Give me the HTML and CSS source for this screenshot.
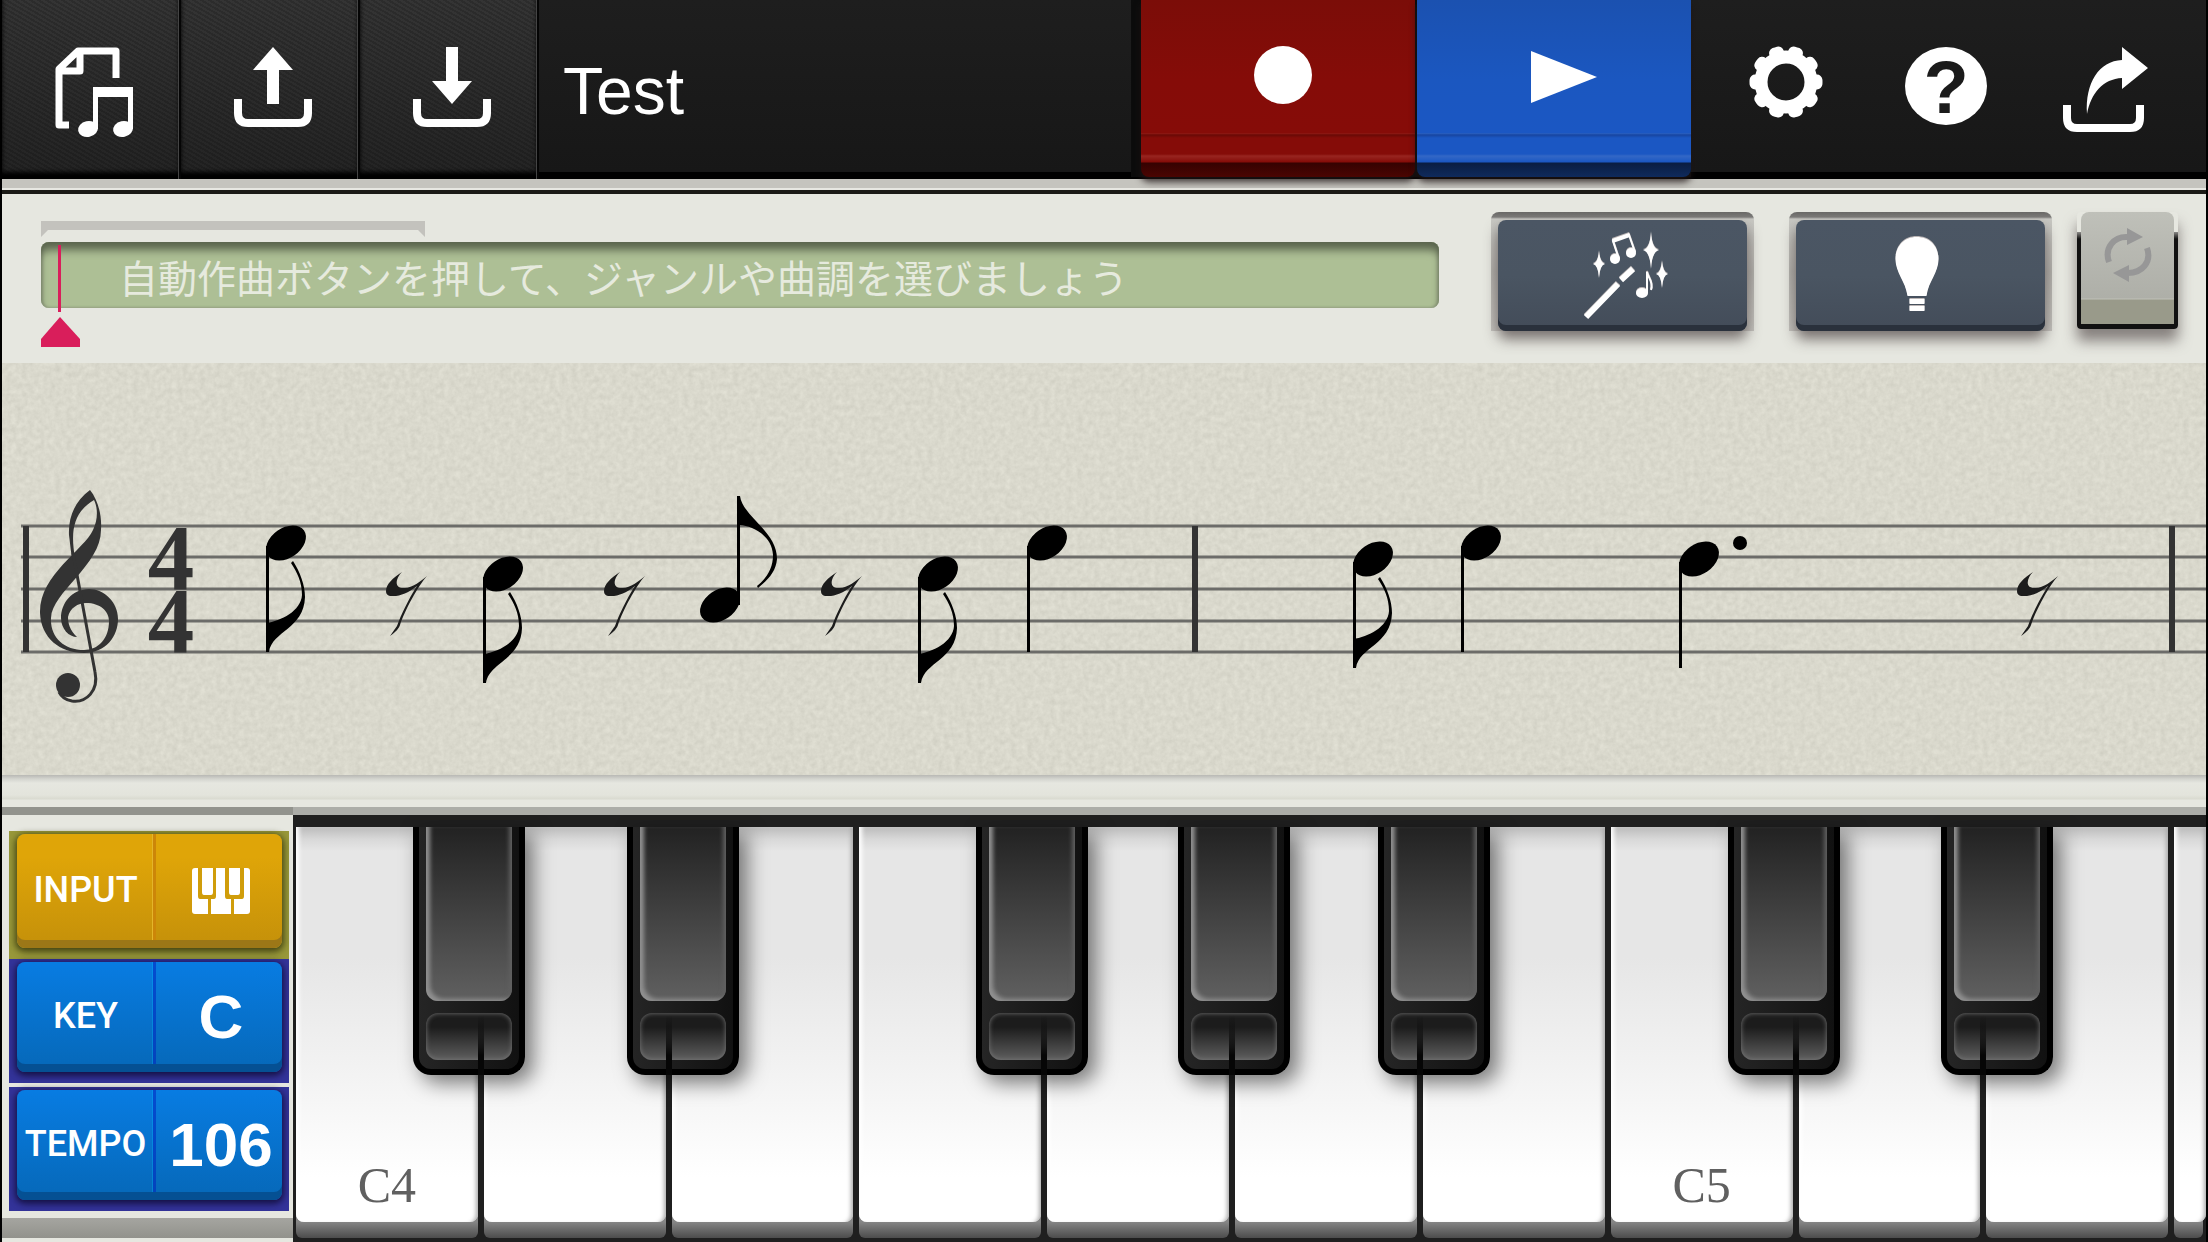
FILE: index.html
```html
<!DOCTYPE html>
<html lang="ja">
<head>
    <meta charset="UTF-8">
    <meta name="viewport" content="width=device-width, initial-scale=1.0">
    <title>Test</title>
    <link rel="stylesheet" href="styles.css">
</head>
<body>
    <!-- Header -->
    <header class="topbar">
        <button class="tool" aria-label="Songs">
            <svg width="78" height="90" viewBox="0 0 78 90">
                <path d="M14 78H4V22L23 4H61V31M4 24H25V4" fill="none" stroke="#fff" stroke-width="7" stroke-linejoin="round"/>
                <path d="M38 40H78V50H38ZM38 40H43V82H38ZM73 40H78V82H73Z" fill="#fff"/>
                <ellipse cx="33" cy="82" rx="10" ry="8" fill="#fff" transform="rotate(-12 33 82)"/>
                <ellipse cx="68" cy="82" rx="10" ry="8" fill="#fff" transform="rotate(-12 68 82)"/>
            </svg>
        </button>
        <button class="tool" aria-label="Upload">
            <svg width="78" height="80" viewBox="0 0 78 80">
                <path d="M39 0L59 23H45V57H33V23H19Z" fill="#fff"/>
                <path d="M4 52V66Q4 76 14 76H64Q74 76 74 66V52" fill="none" stroke="#fff" stroke-width="8"/>
            </svg>
        </button>
        <button class="tool" aria-label="Download">
            <svg width="78" height="80" viewBox="0 0 78 80">
                <path d="M33 0H45V34H59L39 57L19 34H33Z" fill="#fff"/>
                <path d="M4 52V66Q4 76 14 76H64Q74 76 74 66V52" fill="none" stroke="#fff" stroke-width="8"/>
            </svg>
        </button>
        <h1 class="song-title">Test</h1>
        <div class="transport">
            <button class="pad record" aria-label="Record">
                <svg width="58" height="58" viewBox="0 0 58 58"><circle cx="29" cy="29" r="29" fill="#fff"/></svg>
            </button>
            <button class="pad play" aria-label="Play">
                <svg width="66" height="52" viewBox="0 0 66 52"><path d="M0 0L66 26L0 52Z" fill="#fff"/></svg>
            </button>
        </div>
        <div class="actions">
            <button class="action" aria-label="Settings">
                <svg width="74" height="70" viewBox="-37 -35 74 70">
                    <g fill="none" stroke="#fff">
                        <circle r="25" stroke-width="13"/>
                        <circle r="31" stroke-width="11" stroke-linecap="round" pathLength="100" stroke-dasharray="2 8" stroke-dashoffset="1"/>
                    </g>
                </svg>
            </button>
            <button class="action" aria-label="Help">
                <svg width="82" height="78" viewBox="0 0 82 78">
                    <ellipse cx="41" cy="39" rx="41" ry="39" fill="#fff"/>
                    <text x="41" y="66" class="help-mark">?</text>
                </svg>
            </button>
            <button class="action" aria-label="Share">
                <svg width="86" height="86" viewBox="0 0 86 86">
                    <path d="M59 0L85 21L59 42V31C40 32 28 46 24 67C22 36 36 14 59 13Z" fill="#fff"/>
                    <path d="M4 58V71Q4 81 14 81H67Q77 81 77 71V58" fill="none" stroke="#fff" stroke-width="8"/>
                </svg>
            </button>
        </div>
    </header>

    <!-- Timeline and helpers -->
    <section class="toolbar">
        <div class="timeline">
            <svg class="bracket" width="384" height="16" viewBox="0 0 384 16"><path d="M0 0H384V16L377 9H7L0 16Z" fill="#c3c2bd"/></svg>
            <div class="display">
                <p>自動作曲ボタンを押して、ジャンルや曲調を選びましょう</p>
                <span class="playhead"></span>
            </div>
            <svg class="marker" width="40" height="30" viewBox="0 0 40 30"><path d="M19 0L39 22V30H0V22Z" fill="#d91e5b"/></svg>
        </div>
        <div class="slot">
            <button class="slate" aria-label="自動作曲">
                <svg width="86" height="88" viewBox="0 0 86 88" fill="#fff">
                    <path d="M3 85L35 52M38 48L50 37" stroke="#fff" stroke-width="6"/>
                    <path d="M16 19Q17 31 22 32Q17 33 16 46Q15 33 10 32Q15 31 16 19Z"/>
                    <path d="M68 0Q69 17 76 18Q69 20 68 37Q67 20 60 18Q67 17 68 0Z"/>
                    <path d="M79 29Q80 41 85 42Q80 43 79 56Q78 43 73 42Q78 41 79 29Z"/>
                    <path d="M36 27L30 9L46 3L52 20" fill="none" stroke="#fff" stroke-width="2"/>
                    <path d="M29 7L46 1L47 5L30 11Z"/>
                    <circle cx="32" cy="27" r="5"/><circle cx="48" cy="21" r="5"/>
                    <ellipse cx="59" cy="61" rx="6" ry="5"/>
                    <path d="M64 61V40C65 46 71 50 68 58" fill="none" stroke="#fff" stroke-width="2"/>
                </svg>
            </button>
        </div>
        <div class="slot">
            <button class="slate hint" aria-label="ヒント">
                <svg width="44" height="74" viewBox="0 0 43 74" fill="#fff">
                    <path d="M21 0C34 0 43 9 43 22C43 36 33 44 31 59H12C10 44 0 36 0 22C0 9 9 0 21 0ZM14 62H29V67H14ZM14 69H29V74H14Z"/>
                </svg>
            </button>
        </div>
        <div class="loop-slot">
            <button class="loop" aria-label="Loop">
                <svg width="48" height="54" viewBox="0 0 48 54">
                    <path d="M5 34C0 20 10 8 24 9M43 20C48 34 38 45 24 45" fill="none" stroke="#979797" stroke-width="6"/>
                    <path d="M23 0L39 9L23 17ZM25 37V54L9 45Z" fill="#979797"/>
                </svg>
            </button>
        </div>
    </section>

    <!-- Score -->
    <main class="score">
        <svg viewBox="2 363 2204 412">
            <defs>
                <filter id="paper" x="0" y="0" width="100%" height="100%" color-interpolation-filters="sRGB">
                    <feTurbulence type="fractalNoise" baseFrequency="0.18" numOctaves="3" seed="4"/>
                    <feColorMatrix values="0.09 0 0 0 0.808  0.09 0 0 0 0.804  0.09 0 0 0 0.757  0 0 0 0 1"/>
                </filter>
                <ellipse id="head" rx="22" ry="15" transform="rotate(-35)"/>
                <g id="quarter">
                    <use href="#head"/>
                    <path d="M-20 3H-17V109H-20Z"/>
                </g>
                <g id="eighth">
                    <use href="#quarter"/>
                    <path d="M7 18C14 29 19 42 19 54C18 86 -14 88 -17 109H-20V80C-5 78 15 68 16 52C16 39 11 29 5 20Z"/>
                </g>
                <g id="eighth-up">
                    <use href="#head"/>
                    <path d="M17 0V-109H20C23 -88 57 -74 57 -46C56 -34 49 -26 38 -17L37 -19C48 -28 53 -38 53 -50C52 -70 32 -79 20 -80V0Z"/>
                </g>
                <path id="rest" fill="#1c1c1c" d="M16 0C7 6 0 12 0 19C0 25 6 24 10 24C18 23 26 18 31 14C22 28 15 43 11 54L4 64C10 60 13 56 14 53C19 38 32 14 41 4C35 9 26 16 19 16C8 17 9 7 16 0Z"/>
            </defs>
            <rect x="2" y="363" width="2204" height="412" filter="url(#paper)"/>
            <path d="M21 526H2206M21 557H2206M21 589H2206M21 621H2206M21 652H2206" stroke="#6c6c69" stroke-width="3"/>
            <path d="M26 526V652M1195 526V652M2172 526V652" stroke="#333" stroke-width="6"/>

            <!-- Treble clef -->
            <g fill="#333">
                <path d="M90 490C76 500 68 516 69 535L72 560L75 558C70 530 74 512 94 500C98 508 98 520 93 530C84 550 39 575 40 613C41 638 60 653 84 653C106 653 118 636 118 619C118 602 104 589 89 589C72 589 61 603 61 618C61 629 69 637 77 637C70 630 68 624 68 617C70 608 78 603 86 603C100 603 109 611 109 621C109 639 98 650 84 650C64 650 50 637 51 618C52 592 101 565 101 530C102 515 98 500 90 490Z"/>
                <circle cx="68" cy="685" r="12"/>
                <path d="M73 553L95 672C99 691 86 703 72 701C66 700 61 696 59 692" fill="none" stroke="#333" stroke-width="3"/>
            </g>
            <text class="meter"><tspan x="171" y="589">4</tspan><tspan x="171" y="652">4</tspan></text>

            <use href="#eighth" x="286" y="543"/>
            <use href="#rest" x="386" y="572"/>
            <use href="#eighth" x="503" y="574"/>
            <use href="#rest" x="604" y="572"/>
            <use href="#eighth-up" x="720" y="605"/>
            <use href="#rest" x="821" y="572"/>
            <use href="#eighth" x="938" y="574"/>
            <use href="#quarter" x="1047" y="543"/>
            <use href="#eighth" x="1373" y="559"/>
            <use href="#quarter" x="1481" y="543"/>
            <use href="#quarter" x="1699" y="559"/>
            <circle cx="1740" cy="543" r="7"/>
            <use href="#rest" x="2017" y="572"/>
        </svg>
    </main>
    <div class="score-edge"></div>

    <!-- Settings and keyboard -->
    <section class="bottom">
        <div class="settings">
            <div class="box box-input">
                <button class="setting gold">
                    <span class="name">INPUT</span>
                    <span class="value">
                        <svg width="58" height="46" viewBox="0 0 58 46">
                            <rect width="58" height="46" rx="3" fill="#fff"/>
                            <path d="M6 0V28Q6 31 8 31H16V46H19V31H22Q24 31 24 28V0H21V24Q21 27 19 27H12Q10 27 10 24V0ZM33 0V28Q33 31 35 31H39V46H42V31H50Q52 31 52 28V0H48V24Q48 27 46 27H39Q37 27 37 24V0Z" fill="#d09d0a"/>
                        </svg>
                    </span>
                </button>
            </div>
            <div class="box">
                <button class="setting">
                    <span class="name">KEY</span>
                    <span class="value">C</span>
                </button>
            </div>
            <div class="box box-tempo">
                <button class="setting">
                    <span class="name">TEMPO</span>
                    <span class="value">106</span>
                </button>
            </div>
            <div class="settings-foot"></div>
        </div>

        <div class="keyboard">
            <div class="key">
                <button class="white">C4</button>
                <button class="black left" aria-label="C#4"></button>
            </div>
            <div class="key">
                <button class="white" aria-label="D4"></button>
                <button class="black right" aria-label="D#4"></button>
            </div>
            <div class="key">
                <button class="white" aria-label="E4"></button>
            </div>
            <div class="key">
                <button class="white" aria-label="F4"></button>
                <button class="black left" aria-label="F#4"></button>
            </div>
            <div class="key">
                <button class="white" aria-label="G4"></button>
                <button class="black" aria-label="G#4"></button>
            </div>
            <div class="key">
                <button class="white" aria-label="A4"></button>
                <button class="black right" aria-label="A#4"></button>
            </div>
            <div class="key">
                <button class="white" aria-label="B4"></button>
            </div>
            <div class="key">
                <button class="white">C5</button>
                <button class="black left" aria-label="C#5"></button>
            </div>
            <div class="key">
                <button class="white" aria-label="D5"></button>
                <button class="black right" aria-label="D#5"></button>
            </div>
            <div class="key">
                <button class="white" aria-label="E5"></button>
            </div>
            <div class="key">
                <button class="white" aria-label="F5"></button>
            </div>
        </div>
    </section>
</body>
</html>
```
FILE: styles.css
```css
/* Reset */
* {
    margin: 0;
    padding: 0;
    box-sizing: border-box;
}

body {
    display: flex;
    flex-direction: column;
    min-height: 100vh;
    border: solid #000;
    border-width: 0 2px;
    background-color: #e6e7e0;
    font-family: "Liberation Sans", "Noto Sans CJK JP", sans-serif;
    overflow-x: hidden;
}

button {
    border: none;
    background: none;
    color: #fff;
    cursor: pointer;
}

svg {
    display: block;
    overflow: visible;
}

/* Header */
.topbar {
    display: flex;
    height: 194px;
    border-bottom: 4px solid #1b1a16;
    background: linear-gradient(#1e1e1e, #171717 172px, #000 172px, #000 179px, #c5c4be 179px, #c5c4be 188px, #e8e8e2 188px);
}

.tool {
    display: flex;
    justify-content: center;
    align-items: flex-start;
    width: 179px;
    height: 179px;
    padding: 47px 0 0 6px;
    border-right: 2px solid #050505;
    box-shadow: inset -1px 0 0 #444, inset 0 -7px 4px #000;
    background:
        repeating-linear-gradient(30deg, rgba(0, 0, 0, 0.16) 0, rgba(0, 0, 0, 0.16) 2px, transparent 2px, transparent 4px),
        linear-gradient(#343434, #232323);
}

.song-title {
    flex: 1;
    padding-left: 24px;
    line-height: 182px;
    font-size: 66px;
    font-weight: 400;
    color: #fff;
}

.transport {
    display: flex;
    gap: 2px;
    height: 177px;
    padding-left: 10px;
    background: #0c0c0c;
}

.pad {
    display: flex;
    justify-content: center;
    align-items: flex-start;
    width: 274px;
    height: 177px;
    padding: 46px 0 0 10px;
    border-radius: 0 0 8px 8px;
    box-shadow: 0 5px 7px rgba(30, 20, 20, 0.8);
}

.record {
    background: linear-gradient(#7b0d08, #850c08 80px, #860c08 133px, #951a15 133px, #690a06 135px, #850c08 138px, #850c08 154px, #982520 156px, #850c08 162px, #350201 163px, #4b0502);
}

.play {
    padding-top: 51px;
    padding-left: 20px;
    background: linear-gradient(#1b51b0, #1b57c0 80px, #1b57c3 133px, #2b63c6 133px, #1745a0 135px, #1b57c3 138px, #1b57c3 154px, #3367c6 156px, #1b57c3 162px, #0a1d42 163px, #0f2a5c);
}

.actions {
    display: flex;
    padding: 47px 20px 0 15px;
}

.action {
    display: flex;
    justify-content: center;
    align-items: flex-start;
    width: 160px;
}

.help-mark {
    font: bold 74px "Liberation Sans", sans-serif;
    fill: #1b1b1b;
    text-anchor: middle;
}

/* Timeline */
.toolbar {
    display: flex;
    align-items: flex-start;
    height: 169px;
    padding: 18px 24px 0 39px;
}

.timeline {
    flex: 1;
    padding-top: 9px;
}

.display {
    position: relative;
    height: 66px;
    margin-top: 5px;
    padding-left: 78px;
    border-radius: 8px;
    background-color: #adbf95;
    box-shadow: inset 0 10px 8px -2px #5b654e, inset 2px 0 3px #8d9a7c, inset -2px 0 3px #8d9a7c;
    color: #e6eade;
    font-family: "Noto Sans CJK JP", sans-serif;
    font-size: 39px;
    font-weight: 400;
    line-height: 68px;
    white-space: nowrap;
}

.playhead {
    position: absolute;
    left: 17px;
    top: 3px;
    width: 3px;
    height: 67px;
    background-color: #d91e5b;
}

.marker {
    margin-top: 9px;
}

.slot {
    width: 263px;
    height: 119px;
    margin-left: 35px;
    padding: 8px 7px 0;
    border-radius: 8px 8px 0 0;
    background: linear-gradient(#6a6967, #7c7b79 5px, #c8c8c3 7px, #b3b2ad 60px, #c4c3be);
}

.timeline + .slot {
    margin-left: 52px;
}

.slate {
    display: flex;
    justify-content: center;
    align-items: flex-start;
    width: 100%;
    height: 111px;
    padding: 12px 0 0 6px;
    border-radius: 8px;
    background: linear-gradient(#4b5664, #4a5562 50%, #434c59);
    box-shadow: inset 0 -6px 0 #2a313c, 0 8px 14px rgba(70, 60, 60, 0.7);
}

.slate svg {
    filter: drop-shadow(0 -1px 0 #bbb5b5);
}

.hint {
    padding: 17px 8px 0 0;
}

.loop-slot {
    width: 101px;
    height: 117px;
    margin: 0 4px 0 25px;
    padding: 0 4px;
    border-radius: 4px;
    background: linear-gradient(transparent 20px, #8b8a87 20px, #111 27px);
    box-shadow: 0 12px 14px rgba(70, 60, 60, 0.6);
}

.loop {
    display: flex;
    justify-content: center;
    align-items: flex-start;
    width: 100%;
    height: 112px;
    padding-top: 16px;
    border-radius: 8px 8px 0 0;
    background: linear-gradient(#bfc0b9, #aeafa8 86px, #c0c1b8 87px, #999a8a 88px);
}

/* Score */
.score {
    background-color: #dad9cd;
    overflow: hidden;
}

.score svg {
    width: 100%;
}

.meter {
    font: bold 93px "Liberation Serif", serif;
    fill: #333;
    text-anchor: middle;
}

.score-edge {
    height: 32px;
    background: linear-gradient(#b8b8b4, #d4d5cf 4px, #e6e7e0 8px, #e3e4dc 20px, #d9dad0 24px, #e6e7e0 25px);
}

/* Settings */
.bottom {
    display: grid;
    grid-template-columns: 291px 1fr;
    flex: 1;
}

.settings {
    display: flex;
    flex-direction: column;
    padding: 16px 4px 0 7px;
    border-top: 8px solid #92938d;
}

.box {
    height: 124px;
    padding: 3px 7px 11px 8px;
    background-color: #339;
}

.box-input {
    height: 128px;
    background-color: #98983a;
}

.box-tempo {
    margin-top: 4px;
}

.setting {
    display: grid;
    grid-template-columns: 137px 1fr;
    align-items: center;
    width: 100%;
    height: 100%;
    padding-bottom: 2px;
    border-radius: 8px;
    background:
        linear-gradient(90deg, transparent 135px, rgba(0, 190, 255, 0.3) 135px, rgba(0, 190, 255, 0.3) 136px, rgba(0, 30, 190, 0.5) 136px, rgba(0, 30, 190, 0.5) 139px, transparent 139px),
        linear-gradient(#087ce2, #0668b8);
    box-shadow: inset 0 -8px 0 #055093, 0 2px 6px 2px rgba(15, 10, 50, 0.8);
}

.gold {
    background:
        linear-gradient(90deg, transparent 135px, #e4b52a 135px, #e4b52a 136px, #cc8608 136px, #cc8608 139px, transparent 139px),
        linear-gradient(#dfa508 20%, #c4900a);
    box-shadow: inset 0 -8px 0 #9c7717, 0 2px 6px 2px rgba(50, 50, 10, 0.8);
}

.name {
    font-family: Roboto, sans-serif;
    font-size: 36px;
    font-weight: 500;
    line-height: 40px;
    text-align: center;
}

.value {
    display: flex;
    justify-content: center;
    padding: 2px 0 0 6px;
    font-size: 62px;
    font-weight: 700;
    line-height: 62px;
}

.settings-foot {
    height: 20px;
    margin: 7px -4px 0 -7px;
    background: linear-gradient(#a5a5a0, #92928c);
}

/* Keyboard */
.keyboard {
    display: grid;
    grid-template-columns: repeat(10, 54fr) 10fr;
    border-top: 8px solid #acada8;
    padding: 12px 0 4px;
    background-color: #1f1f1f;
    overflow: hidden;
}

.key {
    position: relative;
    padding: 0 3px 16px;
    min-width: 0;
}

.key:last-child {
    padding-right: 0;
}

/* Front lip of the white key */
.key::before {
    content: "";
    position: absolute;
    left: 3px;
    right: 3px;
    bottom: 0;
    height: 26px;
    border-radius: 0 0 6px 6px;
    background: linear-gradient(#858585 10px, #4c4c4c);
}

.white {
    position: relative;
    width: 100%;
    height: 100%;
    padding-top: 320px;
    border-radius: 0 0 8px 8px;
    background: linear-gradient(#bbb, #d8d8d8 12px, #e6e6e6 24px, #e6e6e6 130px, #f2f2f2 240px, #fff 350px);
    box-shadow: inset 5px 0 4px -2px #fff, inset -5px 0 4px -3px #aaa;
    color: #606060;
    font-family: "Liberation Serif", serif;
    font-size: 50px;
}

.black {
    position: absolute;
    z-index: 1;
    top: 0;
    right: -58px;
    width: 112px;
    height: 248px;
    border: 6px solid #000;
    border-top: none;
    border-radius: 0 0 18px 18px;
    background: linear-gradient(90deg, #252525, #111);
    box-shadow: 8px 8px 20px rgba(0, 0, 0, 0.5);
}

.black.left {
    right: -44px;
}

.black.right {
    right: -70px;
}

.black::before,
.black::after {
    content: "";
    position: absolute;
    left: 7px;
    right: 7px;
}

.black::before {
    top: 0;
    height: 174px;
    border-radius: 0 0 12px 12px;
    background: linear-gradient(#222, #606060);
    box-shadow: inset 6px -4px 4px -2px #909090, inset -5px 0 4px -2px #606060;
}

.black::after {
    top: 186px;
    height: 47px;
    border-radius: 12px;
    background: linear-gradient(#1c1c1c 30%, #5e5e5e);
    box-shadow: inset 0 0 5px #777;
}

/* Gap between white keys, seen through the tip of the black key */
.key:has(.black)::after {
    content: "";
    position: absolute;
    z-index: 2;
    top: 188px;
    right: -3px;
    width: 6px;
    height: 60px;
    background: linear-gradient(transparent, #060606 40px);
}
```
